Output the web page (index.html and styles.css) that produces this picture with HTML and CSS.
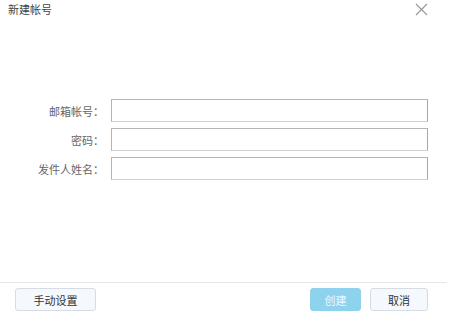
FILE: index.html
```html
<!DOCTYPE html>
<html lang="zh-CN">
<head>
  <meta charset="UTF-8">
  <title>新建帐号</title>
  <link rel="stylesheet" href="styles.css">
</head>
<body>
<div class="dialog">
  <div class="dialog-header">
    <span class="dialog-title">新建帐号</span>
    <span class="close-btn">
      <svg width="13" height="13" viewBox="0 0 13 13"><path d="M1 1L12 12M12 1L1 12" stroke="#9a9a9a" stroke-width="1.2" fill="none"/></svg>
    </span>
  </div>
  <div class="dialog-body">
    <div class="form-row">
      <label class="form-label">邮箱帐号：</label>
      <input type="text" class="form-input">
    </div>
    <div class="form-row">
      <label class="form-label">密码：</label>
      <input type="password" class="form-input">
    </div>
    <div class="form-row">
      <label class="form-label">发件人姓名：</label>
      <input type="text" class="form-input">
    </div>
  </div>
  <div class="dialog-footer">
    <button class="btn btn-manual">手动设置</button>
    <div class="footer-right">
      <button class="btn btn-primary" disabled>创建</button>
      <button class="btn btn-cancel">取消</button>
    </div>
  </div>
</div>
</body>
</html>
```

FILE: styles.css
```css
body {
  margin: 0;
  padding: 0;
  background: #fff;
  font-family: "Noto Sans CJK SC", "Liberation Sans", sans-serif;
  font-size: 11px;
  color: #333;
}
.dialog {
  width: 462px;
  height: 321px;
  display: flex;
  flex-direction: column;
  background: #fff;
}
.dialog-header {
  height: 18px;
  display: flex;
  align-items: center;
  justify-content: space-between;
  padding: 0 34px 0 8px;
}
.dialog-title {
  font-size: 11px;
  color: #444;
  line-height: 18px;
}
.close-btn {
  display: flex;
}
.dialog-body {
  flex: 1;
  padding: 81px 34px 0 0;
  display: flex;
  flex-direction: column;
  gap: 6px;
}
.form-row {
  display: flex;
  align-items: center;
  height: 23px;
}
.form-label {
  width: 111px;
  padding-right: 7px;
  box-sizing: border-box;
  text-align: right;
  color: #666;
}
.form-input {
  flex: 1;
  height: 23px;
  box-sizing: border-box;
  margin: 0;
  border: 1px solid #b4b4b4;
  border-bottom-color: #d0d0d0;
  border-right-color: #a8a8a8;
  padding: 0 4px;
  font-size: 12px;
  outline: none;
}
.dialog-footer {
  border-top: 1px solid #e6e6e6;
  margin-right: 15px;
  padding: 5px 19px 10px 15px;
  display: flex;
  align-items: center;
  justify-content: space-between;
}
.footer-right {
  display: flex;
  gap: 9px;
}
.btn {
  height: 23px;
  width: 58px;
  padding: 0;
  font-family: inherit;
  font-size: 11px;
  color: #333;
  background: #f5f8fc;
  border: 1px solid #d6dce4;
  border-radius: 3px;
}
.btn-manual {
  width: 81px;
}
.btn-primary {
  width: 51px;
  background: #8fd2ee;
  border-color: #8fd2ee;
  color: #eaf7fd;
}
```
